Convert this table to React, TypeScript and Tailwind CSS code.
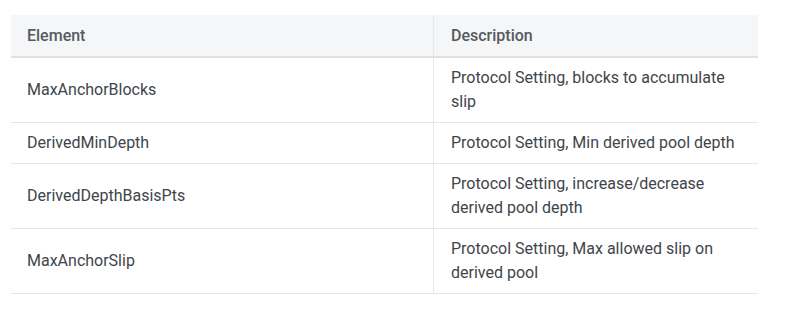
import React from 'react';

// Protocol settings table
const rows: { element: string; description: string }[] = [
  { element: 'MaxAnchorBlocks', description: 'Protocol Setting, blocks to accumulate slip' },
  { element: 'DerivedMinDepth', description: 'Protocol Setting, Min derived pool depth' },
  { element: 'DerivedDepthBasisPts', description: 'Protocol Setting, increase/decrease derived pool depth' },
  { element: 'MaxAnchorSlip', description: 'Protocol Setting, Max allowed slip on derived pool' },
];

export default function App() {
  return (
    <div className="w-[801px] h-[313px] bg-white pt-[15px] pl-[11px] font-['Roboto',sans-serif] text-base">
      <div className="w-[747px]">
        {/* header */}
        <div className="grid grid-cols-[422px_325px] bg-[#f5f6f7] border-b-2 border-[#dfe2e5] text-[#555a61] font-medium">
          <div className="h-[41px] flex items-center pl-4">Element</div>
          <div className="h-[41px] flex items-center pl-[17px] border-l border-[#e6e7e8]">Description</div>
        </div>

        {rows.map((row) => (
          <div
            key={row.element}
            className="grid grid-cols-[422px_325px] border-b border-[#e6e6e6] text-[#40454a] leading-6"
          >
            <div className="flex items-center pl-4 py-2">{row.element}</div>
            <div className="pl-[17px] pr-4 py-2 border-l border-[#e6e7e8]">{row.description}</div>
          </div>
        ))}
      </div>
    </div>
  );
}
